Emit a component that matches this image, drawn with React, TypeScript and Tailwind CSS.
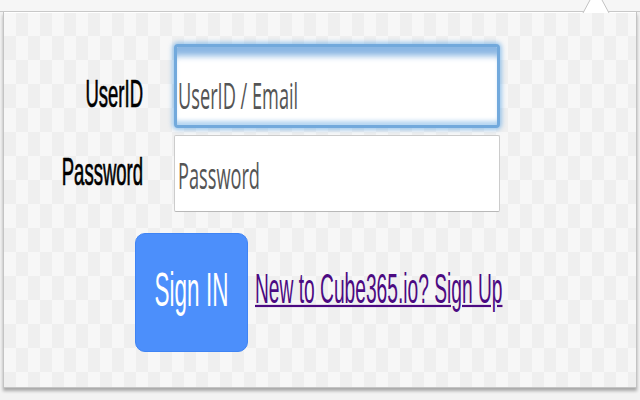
import React from "react";

export default function App() {
  return (
    <div className="relative w-[640px] h-[400px] overflow-hidden bg-[#f2f2f2] flex flex-col font-['Liberation_Sans',Arial,sans-serif]">
      <div className="h-[12px] shrink-0 bg-[#f6f6f6] border-b border-[#c8c8c8]" />
      <svg className="absolute left-[582px] top-0" width="28" height="14" viewBox="0 0 28 14">
        <polygon points="1,13 8,0 20,0 27,13" fill="#ffffff" />
        <polyline points="1,13 8,0" fill="none" stroke="#c2c2c2" strokeWidth="1" />
        <polyline points="20,0 27,13" fill="none" stroke="#c2c2c2" strokeWidth="1" />
      </svg>
      <div className="mx-[3px] h-[376px] shrink-0 border-x border-b border-[#c4c4c4] bg-[#f4f4f4] bg-[image:repeating-conic-gradient(#efefef_0%_25%,#f7f7f7_0%_50%)] bg-[length:24px_48px] bg-size-[24px_48px] shadow-[0_3px_3px_rgba(0,0,0,0.3)] flex flex-col">
        <div className="h-px bg-white" />
        <div className="mt-[31px] flex">
          <div className="w-[139px] h-[84px] pt-[18px] flex items-center justify-end">
            <span className="block text-[18.5px] leading-none text-black scale-y-[2.1] [-webkit-text-stroke:0.35px_black]">UserID</span>
          </div>
          <div className="ml-[31px] w-[326px] h-[84px] rounded-[4px] border-[3px] border-[#72a9dc] bg-white shadow-[0_0_4px_2px_rgba(102,170,230,0.6),inset_0_13px_6px_-4px_rgba(110,165,220,0.8),inset_0_-7px_4px_-3px_rgba(150,195,235,0.7)] pt-[18px] pl-[1px] flex items-center">
            <span className="block font-['Open_Sans',sans-serif] text-[18.2px] leading-none text-[#555555] scale-y-[2.0]">UserID / Email</span>
          </div>
        </div>
        <div className="mt-[7px] flex">
          <div className="w-[139px] h-[77px] flex items-center justify-end">
            <span className="block text-[18.5px] leading-none text-black scale-y-[2.1] [-webkit-text-stroke:0.35px_black]">Password</span>
          </div>
          <div className="ml-[31px] w-[326px] h-[77px] rounded-[2px] border border-[#cccccc] border-b-[#b8b8b8] bg-white pt-[3px] pl-[3px] flex items-center">
            <span className="block font-['Open_Sans',sans-serif] text-[18.2px] leading-none text-[#555555] scale-y-[2.0]">Password</span>
          </div>
        </div>
        <div className="mt-[21px] flex items-center">
          <div className="ml-[131px] w-[113px] h-[119px] rounded-[10px] bg-[#4c8ffb] border border-[#3f84f4] flex items-center justify-center">
            <span className="block text-[22.5px] leading-none text-white scale-y-[2.1]">Sign IN</span>
          </div>
          <a href="#" className="ml-[7px] mb-[8px] block text-[19.2px] leading-none text-[#4b0a82] underline scale-y-[2.2]">
            New to Cube365.io? Sign Up
          </a>
        </div>
      </div>
    </div>
  );
}
